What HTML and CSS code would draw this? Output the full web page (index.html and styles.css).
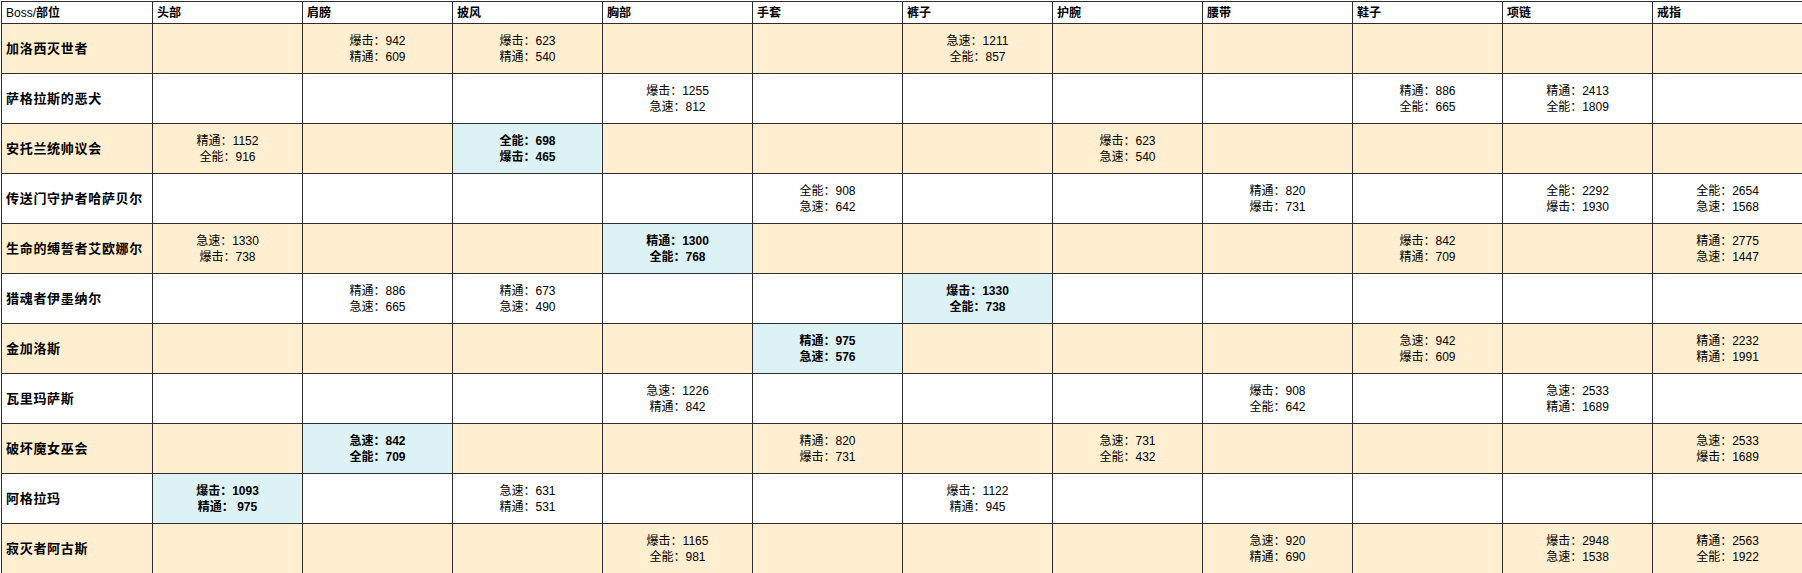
FILE: index.html
```html
<!DOCTYPE html>
<html lang="zh">
<head>
<meta charset="utf-8">
<link rel="stylesheet" href="styles.css">
</head>
<body>
<table class="loot">
<colgroup>
<col class="c-boss"><col class="c"><col class="c"><col class="c"><col class="c"><col class="c"><col class="c"><col class="c"><col class="c"><col class="c"><col class="c"><col class="c">
</colgroup>
<thead>
<tr class="head"><th><span class="en">Boss/</span>部位</th><th>头部</th><th>肩膀</th><th>披风</th><th>胸部</th><th>手套</th><th>裤子</th><th>护腕</th><th>腰带</th><th>鞋子</th><th>项链</th><th>戒指</th></tr>
</thead>
<tbody>
<tr class="odd"><td class="boss">加洛西灭世者</td><td></td><td>爆击：942<br>精通：609</td><td>爆击：623<br>精通：540</td><td></td><td></td><td>急速：1211<br>全能：857</td><td></td><td></td><td></td><td></td><td></td></tr>
<tr><td class="boss">萨格拉斯的恶犬</td><td></td><td></td><td></td><td>爆击：1255<br>急速：812</td><td></td><td></td><td></td><td></td><td>精通：886<br>全能：665</td><td>精通：2413<br>全能：1809</td><td></td></tr>
<tr class="odd"><td class="boss">安托兰统帅议会</td><td>精通：1152<br>全能：916</td><td></td><td class="hl">全能：698<br>爆击：465</td><td></td><td></td><td></td><td>爆击：623<br>急速：540</td><td></td><td></td><td></td><td></td></tr>
<tr><td class="boss">传送门守护者哈萨贝尔</td><td></td><td></td><td></td><td></td><td>全能：908<br>急速：642</td><td></td><td></td><td>精通：820<br>爆击：731</td><td></td><td>全能：2292<br>爆击：1930</td><td>全能：2654<br>急速：1568</td></tr>
<tr class="odd"><td class="boss">生命的缚誓者艾欧娜尔</td><td>急速：1330<br>爆击：738</td><td></td><td></td><td class="hl">精通：1300<br>全能：768</td><td></td><td></td><td></td><td></td><td>爆击：842<br>精通：709</td><td></td><td>精通：2775<br>急速：1447</td></tr>
<tr><td class="boss">猎魂者伊墨纳尔</td><td></td><td>精通：886<br>急速：665</td><td>精通：673<br>急速：490</td><td></td><td></td><td class="hl">爆击：1330<br>全能：738</td><td></td><td></td><td></td><td></td><td></td></tr>
<tr class="odd"><td class="boss">金加洛斯</td><td></td><td></td><td></td><td></td><td class="hl">精通：975<br>急速：576</td><td></td><td></td><td></td><td>急速：942<br>爆击：609</td><td></td><td>精通：2232<br>精通：1991</td></tr>
<tr><td class="boss">瓦里玛萨斯</td><td></td><td></td><td></td><td>急速：1226<br>精通：842</td><td></td><td></td><td></td><td>爆击：908<br>全能：642</td><td></td><td>急速：2533<br>精通：1689</td><td></td></tr>
<tr class="odd"><td class="boss">破坏魔女巫会</td><td></td><td class="hl">急速：842<br>全能：709</td><td></td><td></td><td>精通：820<br>爆击：731</td><td></td><td>急速：731<br>全能：432</td><td></td><td></td><td></td><td>急速：2533<br>爆击：1689</td></tr>
<tr><td class="boss">阿格拉玛</td><td class="hl">爆击：1093<br>精通：&nbsp;975</td><td></td><td>急速：631<br>精通：531</td><td></td><td></td><td>爆击：1122<br>精通：945</td><td></td><td></td><td></td><td></td><td></td></tr>
<tr class="odd"><td class="boss">寂灭者阿古斯</td><td></td><td></td><td></td><td>爆击：1165<br>全能：981</td><td></td><td></td><td></td><td>急速：920<br>精通：690</td><td></td><td>爆击：2948<br>急速：1538</td><td>精通：2563<br>全能：1922</td></tr>
</tbody>
</table>
</body>
</html>
```
FILE: styles.css
```css
html, body {
  margin: 0;
  padding: 0;
  background: #ffffff;
}
body {
  padding: 1px 0 0 1px;
  font-family: "Liberation Sans", "Noto Sans CJK SC", sans-serif;
  font-size: 12px;
  color: #000;
}
.loot {
  border-collapse: collapse;
  table-layout: fixed;
  width: 1801px;
}
.c-boss { width: 151px; }
.c { width: 150px; }
.loot th,
.loot td {
  border: 1px solid #2e2e2e;
  padding: 0;
  overflow: hidden;
  white-space: nowrap;
}
.head th {
  height: 21px;
  text-align: left;
  padding-left: 4px;
  font-weight: bold;
  font-size: 12px;
  line-height: 14px;
  vertical-align: middle;
}
.head th .en {
  font-weight: normal;
}
tbody td {
  height: 49px;
  text-align: center;
  vertical-align: middle;
  line-height: 16px;
  font-size: 12px;
}
tbody tr.odd td {
  background: #ffefd0;
}
tbody td.boss {
  text-align: left;
  padding-left: 4px;
  font-weight: bold;
  font-size: 13px;
  letter-spacing: 0.7px;
}
tbody tr td.hl {
  background: #dcf2f4;
  font-weight: bold;
}
```
